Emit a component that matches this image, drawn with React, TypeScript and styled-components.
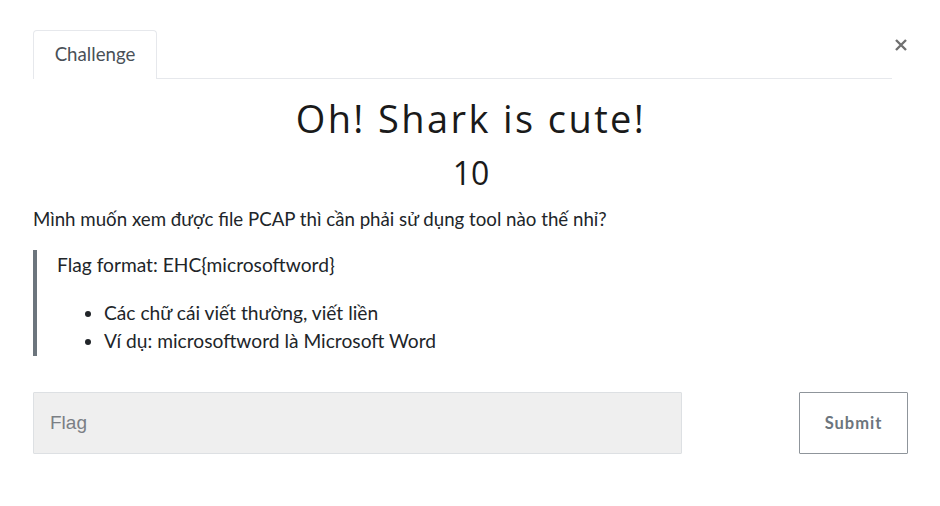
import React from 'react'
import styled, { createGlobalStyle } from 'styled-components'

const Global = createGlobalStyle`
  body {
    margin: 0;
    background: #fff;
    font-family: Lato, "Liberation Sans", sans-serif;
    color: #212529;
  }
`

const App = () => {
  return (
    <>
      <Global />
      <Modal>
        <Header>
          <Tabs>
            <Tab>Challenge</Tab>
          </Tabs>
          <Close aria-label="Close">
            <svg width="12" height="12" viewBox="0 0 12 12">
              <path d="M1 1L11 11M11 1L1 11" stroke="#707070" strokeWidth="2.4" strokeLinecap="butt" />
            </svg>
          </Close>
        </Header>
        <Title>Oh! Shark is cute!</Title>
        <Points>10</Points>
        <Desc>Mình muốn xem được file PCAP thì cần phải sử dụng tool nào thế nhỉ?</Desc>
        <Quote>
          <QuoteText>Flag format: EHC{'{'}microsoftword{'}'}</QuoteText>
          <List>
            <li>Các chữ cái viết thường, viết liền</li>
            <li>Ví dụ: microsoftword là Microsoft Word</li>
          </List>
        </Quote>
        <SubmitRow>
          <FlagInput placeholder="Flag" />
          <SubmitButton>Submit</SubmitButton>
        </SubmitRow>
      </Modal>
    </>
  )
}

export default App

const Modal = styled.div`
  width: 876px;
  padding: 30px 0 0 33px;
`

const Header = styled.div`
  display: flex;
  align-items: flex-start;
`

const Tabs = styled.div`
  display: flex;
  width: 859px;
  border-bottom: 1px solid #e6e8ec;
`

const Tab = styled.div`
  box-sizing: border-box;
  width: 124px;
  height: 49px;
  display: flex;
  align-items: center;
  justify-content: center;
  font-size: 18.7px;
  color: #495057;
  border: 1px solid #e6e8ec;
  border-bottom: 0;
  border-radius: 4px 4px 0 0;
  background: #fff;
  margin-bottom: -1px;
  padding-bottom: 2px;
  position: relative;
  z-index: 1;
`

const Close = styled.div`
  margin: 9px 0 0 3px;
  width: 12px;
  height: 12px;
  display: flex;
`

const Title = styled.h1`
  margin: 13px 0 0;
  text-align: center;
  font-family: "Open Sans", Lato, sans-serif;
  font-weight: 400;
  font-size: 38px;
  letter-spacing: 2.4px;
  line-height: 52px;
  color: #1a1a1a;
`

const Points = styled.div`
  text-align: center;
  font-family: "Open Sans", Lato, sans-serif;
  font-size: 32px;
  line-height: 40px;
  margin-top: 9px;
  color: #1a1a1a;
`

const Desc = styled.p`
  margin: 12px 0 0;
  font-size: 18.7px;
  line-height: 28px;
  color: #212529;
`

const Quote = styled.blockquote`
  margin: 17px 0 0;
  border-left: 4px solid #6c757d;
  padding: 1px 0 1px 20px;
`

const QuoteText = styled.p`
  margin: 0;
  font-size: 19.2px;
  line-height: 28px;
`

const List = styled.ul`
  margin: 20px 0 0;
  padding-left: 47px;
  font-size: 19.2px;
  line-height: 28px;
`

const SubmitRow = styled.div`
  display: flex;
  justify-content: space-between;
  margin-top: 36px;
`

const FlagInput = styled.input`
  width: 649px;
  height: 62px;
  box-sizing: border-box;
  background: #efefef;
  border: 1px solid #dde0e3;
  border-radius: 1px;
  padding: 0 16px;
  font-family: "Liberation Sans", Arial, sans-serif;
  font-size: 19px;
  outline: none;
  &::placeholder {
    color: #7b7f85;
  }
`

const SubmitButton = styled.button`
  width: 109px;
  height: 62px;
  box-sizing: border-box;
  background: #fff;
  border: 1px solid #8f959b;
  border-radius: 1px;
  font-family: Lato, sans-serif;
  font-weight: 700;
  font-size: 16.5px;
  letter-spacing: 1px;
  color: #6c757d;
  margin-right: 1px;
`
